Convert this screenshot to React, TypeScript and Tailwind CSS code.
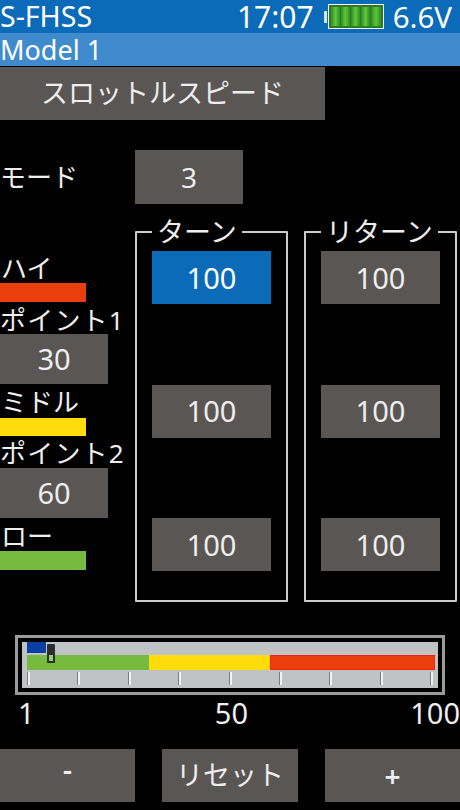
const FONT = "font-['Noto_Sans','Noto_Sans_CJK_JP',sans-serif]";

function Btn({ children, className, active }: { children: React.ReactNode; className: string; active?: boolean }) {
  return (
    <div className={`flex items-center justify-center ${active ? 'bg-[#0b6bb9] text-white' : 'bg-[#5a5654] text-[#eeeeee]'} ${className}`}>
      {children}
    </div>
  );
}

function Battery() {
  return (
    <div className="flex items-center">
      <div className="w-[3px] h-[12px] bg-[#d8e6f2] rounded-l-[1px]" />
      <div className="flex gap-[1px] w-[56px] h-[25px] border border-[#eef4fa] bg-[#2f7a20] p-[2px] ml-[1px]">
        {[0, 1, 2, 3, 4].map(i => (
          <div key={i} className="flex-1 bg-[linear-gradient(90deg,#2f8f24,#5fc63c,#2f8f24)]" />
        ))}
      </div>
    </div>
  );
}

function Group({ title, first }: { title: string; first?: boolean }) {
  return (
    <fieldset className="w-[153px] h-[385px] border-2 border-[#cccccc] rounded-[1px] flex flex-col">
      <legend className="ml-[15px] px-[5px] text-[27px] leading-[30px] text-[#eeeeee]">{title}</legend>
      <div className="flex flex-col items-center gap-[80.5px] pt-[4px]">
        <Btn active={first} className="w-[119px] h-[53px] text-[29px]">100</Btn>
        <Btn className="w-[119px] h-[53px] text-[29px]">100</Btn>
        <Btn className="w-[119px] h-[53px] text-[29px]">100</Btn>
      </div>
    </fieldset>
  );
}

function Slider() {
  return (
    <div className="mx-[15px] h-[60px] border-[3px] border-[#9a9c9c] bg-black p-[4px]">
      <div className="relative h-full bg-[#bfc3c4] pl-[5px] pr-[3px]">
        <div className="w-[19px] h-[11px] bg-[#0a3fa3]" />
        <div className="flex h-[15px] mt-[2px]">
          <div className="w-[122px] bg-[#76bb3f]" />
          <div className="w-[121px] bg-[#ffdc0a]" />
          <div className="w-[165px] bg-[#ea3f0c] border border-[#f8200c]" />
        </div>
        <div className="flex justify-between mt-[2px] mr-[2px] h-[13px]">
          {[0, 1, 2, 3, 4, 5, 6, 7, 8].map(i => (
            <div key={i} className="w-[3px] bg-[#f2f2f2] border-l border-[#7c7c7c]" />
          ))}
        </div>
        {/* cursor */}
        <div className="absolute left-[25px] top-[2px] w-[8px] h-[19px] bg-[#2d2d2d] rounded-[1px] flex items-end justify-center pb-[2px]">
          <div className="w-[4px] h-[6px] bg-[#9ccc70]" />
        </div>
      </div>
    </div>
  );
}

export default function App() {
  return (
    <div className={`w-[460px] h-[810px] bg-black overflow-hidden text-[#eeeeee] ${FONT}`}>
      {/* Status bar */}
      <div className="h-[33px] bg-[#0b6bb9] flex items-center text-white text-[28.5px] leading-[33px]">
        <span>S-FHSS</span>
        <span className="ml-auto text-[30px]">17:07</span>
        <div className="ml-[10px]"><Battery /></div>
        <span className="ml-[9px] mr-[8px] text-[29.5px]">6.6V</span>
      </div>
      <div className="h-[33px] bg-[#3f8bcd] flex items-center text-white text-[27px] leading-[33px]">Model 1</div>

      {/* Title */}
      <Btn className="mt-[1px] w-[325px] h-[53px] text-[27px]">スロットルスピード</Btn>

      {/* Mode */}
      <div className="flex items-center mt-[30px] h-[54px]">
        <div className="w-[135px] text-[26px]">モード</div>
        <Btn className="w-[108px] h-[54px] text-[28px]">3</Btn>
      </div>

      <div className="flex mt-[13px] h-[387px]">
        {/* Left labels */}
        <div className="w-[135px] flex flex-col text-[26px] leading-[30px] pt-[36px]">
          <div className="h-[30px] pl-[1px]">ハイ</div>
          <div className="w-[86px] h-[19px] bg-[#ea3f0c]" />
          <div className="h-[30px] mt-[3px] whitespace-nowrap tracking-[1.2px]">ポイント1</div>
          <Btn className="w-[108px] h-[50px] mt-[-1px] text-[29px]">30</Btn>
          <div className="h-[30px] mt-[3px] pl-[1px]">ミドル</div>
          <div className="w-[86px] h-[18px] mt-[1px] bg-[#ffdc0a]" />
          <div className="h-[30px] mt-[2px] whitespace-nowrap tracking-[1.2px]">ポイント2</div>
          <Btn className="w-[108px] h-[50px] text-[29px]">60</Btn>
          <div className="h-[30px] mt-[3px] pl-[1px]">ロー</div>
          <div className="w-[86px] h-[19px] bg-[#76bb3f]" />
        </div>
        <div className="flex gap-[16px]">
          <Group title="ターン" first />
          <Group title="リターン" />
        </div>
      </div>

      <div className="mt-[31px]"><Slider /></div>

      {/* Scale */}
      <div className="flex justify-between h-[36px] pl-[18px] text-[29px] leading-[36px]">
        <span>1</span>
        <span className="ml-[18px]">50</span>
        <span>100</span>
      </div>

      {/* Bottom buttons */}
      <div className="flex justify-between mt-[18px]">
        <Btn className="w-[135px] h-[53px] text-[28px] font-semibold pb-[14px]">-</Btn>
        <Btn className="w-[136px] h-[53px] text-[27px]">リセット</Btn>
        <Btn className="w-[135px] h-[53px] text-[28px] font-semibold">+</Btn>
      </div>
    </div>
  );
}
